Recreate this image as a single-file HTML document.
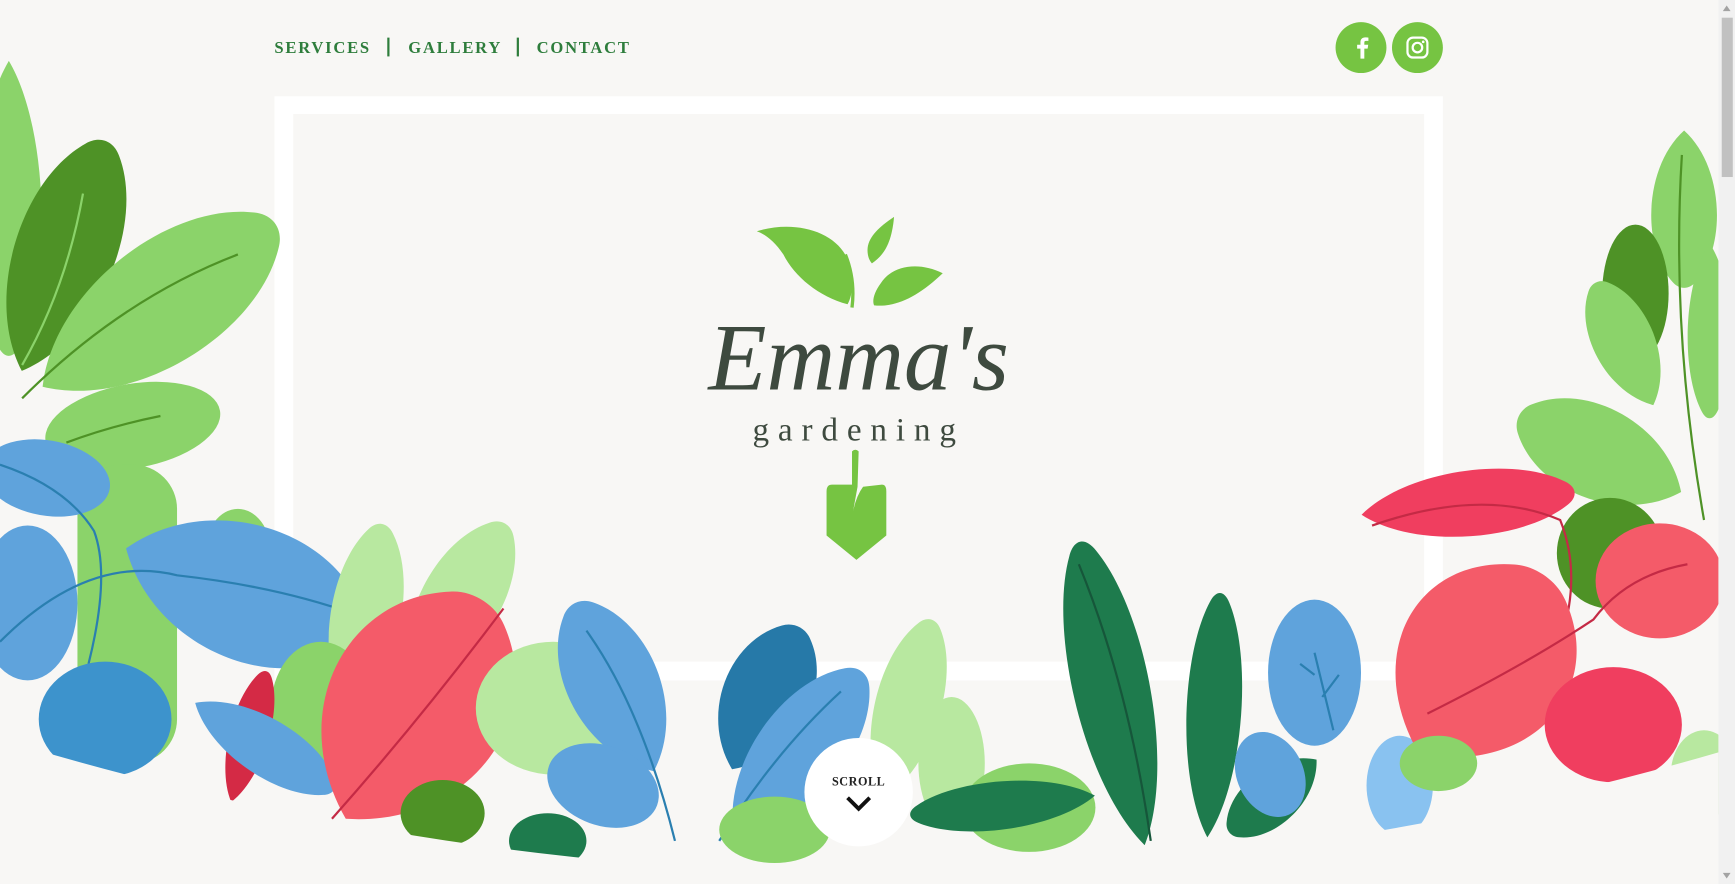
<!DOCTYPE html>
<html><head><meta charset="utf-8"><style>
html,body{margin:0;padding:0;background:#f8f7f5;overflow:hidden;width:1735px;height:884px}
svg{display:block}
</style></head><body>
<svg width="1735" height="884" viewBox="0 0 1568 799" preserveAspectRatio="none" xmlns="http://www.w3.org/2000/svg" xmlns:xlink="http://www.w3.org/1999/xlink">
<defs>
<path id="lf" d="M0 -1 C1.2 -0.55 1.3 0.45 0.35 0.9 C0.15 1 -0.15 1 -0.35 0.9 C-1.3 0.45 -1.2 -0.55 0 -1Z"/>
</defs>
<rect width="1568" height="799" fill="#f8f7f5"/>
<rect x="248" y="87" width="1056" height="528" fill="#fff"/>
<rect x="265" y="103" width="1022" height="495" fill="#f8f7f5"/>
<g font-family="Liberation Serif, serif" font-size="15" fill="#2e7d3c" font-weight="bold" letter-spacing="1.6">
<text x="248" y="48">SERVICES</text>
<text x="369" y="48">GALLERY</text>
<text x="485" y="48">CONTACT</text>
</g>
<rect x="350" y="34" width="2" height="17" fill="#2e7d3c"/>
<rect x="467" y="34" width="2" height="17" fill="#2e7d3c"/>
<circle cx="1230" cy="43" r="23" fill="#76c442"/>
<path d="M1233 53 V44 H1236 L1236.5 40.5 H1233 V38.5 C1233 37.5 1233.5 37 1234.5 37 H1236.7 V34 C1236 33.9 1235 33.8 1234 33.8 C1231 33.8 1229.5 35.5 1229.5 38.3 V40.5 H1226.5 V44 H1229.5 V53Z" fill="#fff"/>
<circle cx="1281" cy="43" r="23" fill="#76c442"/>
<rect x="1272" y="34" width="18" height="18" rx="5" fill="none" stroke="#fff" stroke-width="2"/>
<circle cx="1281" cy="43" r="4.3" fill="none" stroke="#fff" stroke-width="2"/>
<circle cx="1286.2" cy="37.8" r="1.2" fill="#fff"/>
<!-- logo -->
<path d="M684 209 C720 198 760 210 768 240 C772 255 770 268 766 275 C740 268 718 250 708 230 C700 218 692 212 684 209Z" fill="#76c442"/>
<path d="M808 196 C796 204 784 214 784 226 C784 232 786 236 788 238 C800 230 806 218 808 196Z" fill="#76c442"/>
<path d="M852 247 C830 236 806 240 796 256 C790 264 788 272 790 276 C810 278 830 268 852 247Z" fill="#76c442"/>
<path d="M764 230 C770 245 772 262 770 278" stroke="#76c442" stroke-width="3" fill="none"/>
<text x="776" y="352" text-anchor="middle" font-family="Liberation Serif, serif" font-style="italic" font-size="86" fill="#3e4a3f">Emma's</text>
<text x="776" y="398" text-anchor="middle" font-family="Liberation Serif, serif" font-size="30" fill="#3e4a3f" letter-spacing="8">gardening</text>
<path d="M770 408 Q773 405 776 408 L775 440 L771 462 Q774 448 780 440 L797 438 Q801 438 801 444 L801 484 L774 506 L747 484 L747 444 Q747 438 752 438 L770 438Z" fill="#76c442"/>
<!-- LEFT -->
<use xlink:href="#lf" fill="#8bd36a" transform="translate(8 190) scale(30 135)"/>
<use xlink:href="#lf" fill="#4e9226" transform="translate(58 230) rotate(200) scale(46 112)"/>
<path d="M75 175 Q60 260 20 330" stroke="#8bd36a" stroke-width="2" fill="none"/>
<use xlink:href="#lf" fill="#8bd36a" transform="translate(145 275) rotate(235) scale(55 130)"/>
<path d="M20 360 Q110 270 215 230" stroke="#4e9226" stroke-width="2" fill="none"/>
<ellipse cx="120" cy="385" rx="80" ry="38" fill="#8bd36a" transform="rotate(-10 120 385)"/>
<path d="M60 400 Q100 385 145 376" stroke="#4e9226" stroke-width="2" fill="none"/>
<rect x="70" y="420" width="90" height="270" rx="40" fill="#8bd36a"/>
<ellipse cx="215" cy="500" rx="30" ry="40" fill="#8bd36a"/>
<ellipse cx="42" cy="432" rx="58" ry="34" fill="#5fa3dc" transform="rotate(10 42 432)"/>
<ellipse cx="25" cy="545" rx="45" ry="70" fill="#5fa3dc"/>
<use xlink:href="#lf" fill="#5fa3dc" transform="translate(222 535) rotate(-70) scale(62 115)"/>
<path d="M0 580 Q80 500 160 520 Q250 530 320 555" stroke="#2a7fb0" stroke-width="2" fill="none"/>
<path d="M0 420 Q60 440 85 480 Q100 520 80 600" stroke="#2a7fb0" stroke-width="2" fill="none"/>
<ellipse cx="95" cy="650" rx="60" ry="52" fill="#3d93cc"/>
<use xlink:href="#lf" fill="#b8e8a0" transform="translate(330 560) rotate(190) scale(32 90)"/>
<use xlink:href="#lf" fill="#b8e8a0" transform="translate(415 545) rotate(210) scale(36 85)"/>
<ellipse cx="290" cy="640" rx="45" ry="60" fill="#8bd36a"/>
<use xlink:href="#lf" fill="#d42a45" transform="translate(225 665) rotate(195) scale(18 62)"/>
<use xlink:href="#lf" fill="#5fa3dc" transform="translate(240 675) rotate(-58) scale(26 75)"/>
<use xlink:href="#lf" fill="#f45b69" transform="translate(375 640) rotate(212) scale(82 118)"/>
<path d="M300 740 Q380 650 455 550" stroke="#c42a45" stroke-width="2" fill="none"/>
<ellipse cx="400" cy="735" rx="38" ry="30" fill="#4e9226"/>
<!-- CENTER -->
<ellipse cx="500" cy="640" rx="70" ry="60" fill="#b8e8a0"/>
<use xlink:href="#lf" fill="#b8e8a0" transform="translate(820 640) rotate(195) scale(30 85)"/>
<ellipse cx="860" cy="690" rx="30" ry="60" fill="#b8e8a0"/>
<ellipse cx="930" cy="730" rx="60" ry="40" fill="#8bd36a"/>
<use xlink:href="#lf" fill="#5fa3dc" transform="translate(555 620) rotate(155) scale(42 85)"/>
<path d="M530 570 Q580 640 610 760" stroke="#2a7fb0" stroke-width="2" fill="none"/>
<ellipse cx="545" cy="710" rx="52" ry="36" fill="#5fa3dc" transform="rotate(20 545 710)"/>
<use xlink:href="#lf" fill="#2679a8" transform="translate(692 630) rotate(205) scale(40 72)"/>
<use xlink:href="#lf" fill="#5fa3dc" transform="translate(722 680) rotate(218) scale(40 95)"/>
<path d="M650 760 Q700 680 760 625" stroke="#2a7fb0" stroke-width="2" fill="none"/>
<ellipse cx="495" cy="760" rx="35" ry="25" fill="#1e7b4d"/>
<ellipse cx="700" cy="750" rx="50" ry="30" fill="#8bd36a"/>
<use xlink:href="#lf" fill="#1e7b4d" transform="translate(1005 625) rotate(168) scale(35 142)"/>
<path d="M975 510 Q1020 620 1040 760" stroke="#16563a" stroke-width="2" fill="none"/>
<use xlink:href="#lf" fill="#1e7b4d" transform="translate(1097 645) rotate(183) scale(25 112)"/>
<use xlink:href="#lf" fill="#1e7b4d" transform="translate(905 728) rotate(84) scale(22 85)"/>
<use xlink:href="#lf" fill="#1e7b4d" transform="translate(1150 720) rotate(50) scale(25 52)"/>
<ellipse cx="1188" cy="608" rx="42" ry="66" fill="#5fa3dc"/>
<path d="M1188 590 L1205 660 M1188 610 L1175 600 M1195 630 L1210 610" stroke="#2a7fb0" stroke-width="2" fill="none"/>
<ellipse cx="1148" cy="700" rx="30" ry="40" fill="#5fa3dc" transform="rotate(-25 1148 700)"/>
<ellipse cx="1265" cy="710" rx="30" ry="45" fill="#89c2f0"/>
<!-- RIGHT -->
<use xlink:href="#lf" fill="#8bd36a" transform="translate(1522 190) scale(30 72)"/>
<ellipse cx="1478" cy="265" rx="30" ry="62" fill="#4e9226"/>
<use xlink:href="#lf" fill="#8bd36a" transform="translate(1468 310) rotate(155) scale(28 62)"/>
<use xlink:href="#lf" fill="#8bd36a" transform="translate(1545 300) scale(20 80)"/>
<path d="M1520 140 Q1510 300 1540 470" stroke="#4e9226" stroke-width="2" fill="none"/>
<use xlink:href="#lf" fill="#8bd36a" transform="translate(1445 410) rotate(115) scale(42 82)"/>
<ellipse cx="1455" cy="500" rx="48" ry="50" fill="#4e9226"/>
<ellipse cx="1500" cy="525" rx="58" ry="52" fill="#f45b69"/>
<use xlink:href="#lf" fill="#f03e5f" transform="translate(1328 455) rotate(264) scale(30 98)"/>
<path d="M1240 475 Q1340 440 1410 470 Q1430 520 1410 580" stroke="#c42a45" stroke-width="2" fill="none"/>
<use xlink:href="#lf" fill="#f45b69" transform="translate(1340 600) rotate(215) scale(80 100)"/>
<path d="M1290 645 Q1380 600 1440 560 Q1470 520 1525 510" stroke="#c42a45" stroke-width="2" fill="none"/>
<ellipse cx="1458" cy="655" rx="62" ry="52" fill="#f03e5f"/>
<ellipse cx="1300" cy="690" rx="35" ry="25" fill="#8bd36a"/>
<ellipse cx="1540" cy="700" rx="30" ry="40" fill="#b8e8a0"/>
<!-- curve -->
<path d="M0 668 Q780 905 1553 680 L1553 799 L0 799Z" fill="#f8f7f5"/>
<circle cx="776" cy="716" r="49" fill="#fff"/>
<text x="776" y="710" text-anchor="middle" font-family="Liberation Serif, serif" font-weight="bold" font-size="11" fill="#222" letter-spacing="0.5">SCROLL</text>
<path d="M766 721 L776 731 L786 721" stroke="#111" stroke-width="3.5" fill="none"/>
<rect x="1553" y="0" width="15" height="799" fill="#f1f1f1"/>
<rect x="1556" y="16" width="10" height="144" fill="#c1c1c1"/>
<path d="M1557 10 L1560.5 5 L1564 10Z M1557 789 L1560.5 794 L1564 789Z" fill="#a3a3a3"/>
</svg>
</body></html>
